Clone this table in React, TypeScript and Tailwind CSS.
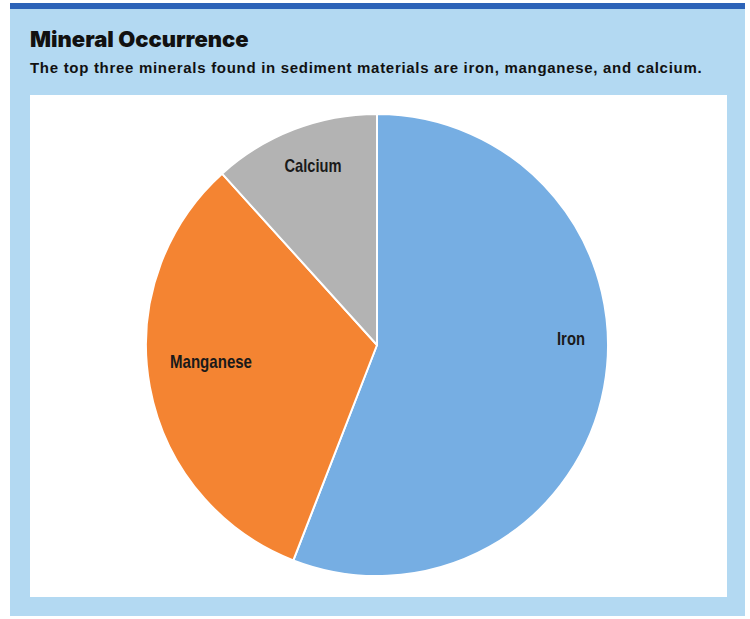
const SLICES = [
  { name: "Iron", value: 55.9, color: "#76aee3", lx: 541, ly: 243, w: 28 },
  { name: "Manganese", value: 32.4, color: "#f48432", lx: 181, ly: 266, w: 82 },
  { name: "Calcium", value: 11.7, color: "#b3b3b3", lx: 283, ly: 70, w: 57 },
];

const CX = 347;
const CY = 250;
const R = 231;

function point(deg: number) {
  const a = (deg * Math.PI) / 180;
  return [CX + R * Math.sin(a), CY - R * Math.cos(a)];
}

function PieChart() {
  const total = SLICES.reduce((s, d) => s + d.value, 0);
  let start = 0;
  const paths = SLICES.map((d) => {
    const sweep = (d.value / total) * 360;
    const [x1, y1] = point(start);
    const [x2, y2] = point(start + sweep);
    const large = sweep > 180 ? 1 : 0;
    start += sweep;
    return {
      ...d,
      d: `M ${CX} ${CY} L ${x1} ${y1} A ${R} ${R} 0 ${large} 1 ${x2} ${y2} Z`,
    };
  });

  return (
    <svg width="697" height="502" viewBox="0 0 697 502">
      {paths.map((p) => (
        <path key={p.name} d={p.d} fill={p.color} stroke="#ffffff" strokeWidth="2" strokeLinejoin="round" />
      ))}
      {/* labels: condensed bold, squeezed to the reference widths */}
      {paths.map((p) => (
        <text
          key={p.name + "-label"}
          x={p.lx - p.w / 2}
          y={p.ly}
          dominantBaseline="central"
          textLength={p.w}
          lengthAdjust="spacingAndGlyphs"
          fill="#1a1a1a"
          fontSize="19"
          fontWeight="700"
          style={{ fontFamily: '"Liberation Sans", Arial, sans-serif' }}
        >
          {p.name}
        </text>
      ))}
    </svg>
  );
}

export default function App() {
  return (
    <div className="w-[750px] h-[619px] bg-white pt-[3px] pl-[10px]">
      <div className="w-[735px]">
        {/* Top rule */}
        <div className="h-[6px] bg-[#2c63b8]" />

        <div className="bg-[#b3d9f2] pl-[20px] pr-[18px] pt-[16px] pb-[19px]">
          <h1 className="font-['Inter',sans-serif] font-black text-[22px] leading-[28px] text-[#111111]">
            Mineral Occurrence
          </h1>
          <p className="font-['Liberation_Sans',Arial,sans-serif] font-bold text-[15px] leading-[20px] tracking-[0.7px] text-[#111111] mt-[5px]">
            The top three minerals found in sediment materials are iron, manganese, and calcium.
          </p>

          {/* Chart area */}
          <div className="bg-white mt-[17px] h-[502px]">
            <PieChart />
          </div>
        </div>
      </div>
    </div>
  );
}
